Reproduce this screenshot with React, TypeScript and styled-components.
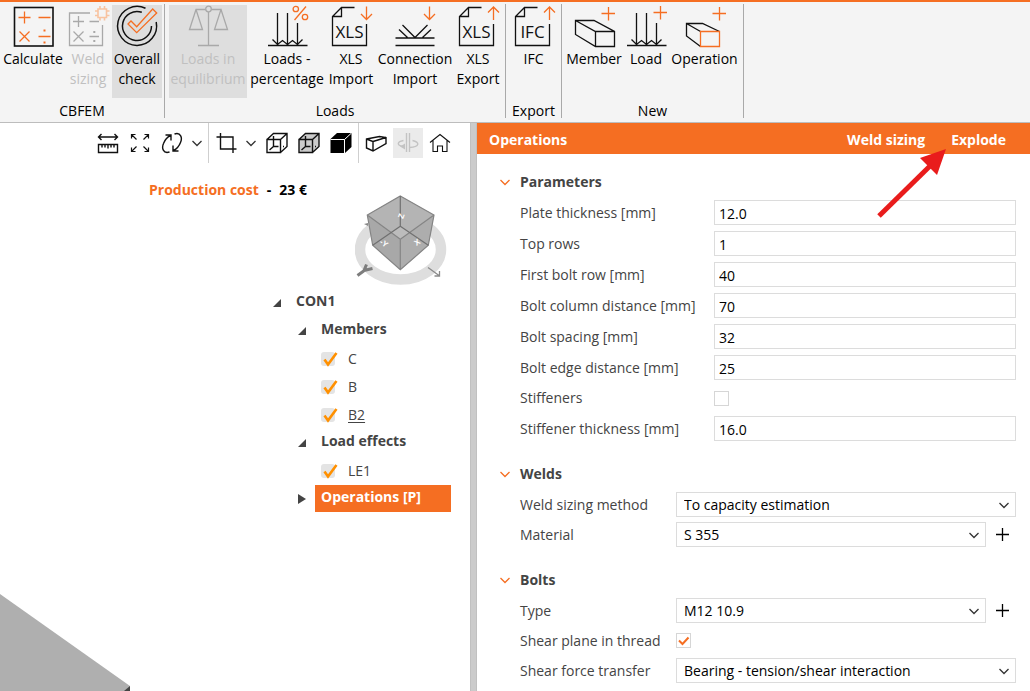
import React, { useId, useState } from 'react';
import styled, { createGlobalStyle, css } from 'styled-components';

const orange = '#f56e22';

const GlobalStyle = createGlobalStyle`
  *, *::before, *::after { box-sizing: border-box; }
  body {
    margin: 0;
    background: #fff;
    color: #444;
    font-family: "Open Sans", "Noto Sans", sans-serif;
    font-size: 14px;
    line-height: 20px;
  }
  button, input, select { font: inherit; color: inherit; }
  button { border: 0; background: none; padding: 0; cursor: pointer; }
  svg { display: block; }
`;

/* ---------- frame ---------- */

const Page = styled.div`
  display: flex;
  flex-direction: column;
  min-height: 100vh;
`;

const Workspace = styled.main`
  display: flex;
  flex: 1;
`;

const Splitter = styled.div`
  flex: none;
  width: 7px;
  background: #cbcbcb;
  border: 1px solid #c0c0c0;
  border-width: 0 1px;
`;

/* ---------- ribbon ---------- */

const Ribbon = styled.header`
  display: flex;
  height: 123px;
  padding: 2px 0 4px;
  background: #f4f4f4;
  border-top: 2px solid ${orange};
  border-bottom: 1px solid #bdbdbd;
  color: #000;
`;

const RibbonGroup = styled.section<{ $pad: number }>`
  display: flex;
  flex-direction: column;
  gap: 4px;
  padding: 1px ${(p) => p.$pad}px 0;
  border-right: 1px solid #a9a9a9;
`;

const RibbonItems = styled.div`
  display: flex;
  gap: 2px;
`;

const RibbonLabel = styled.h2`
  margin: 0;
  font-size: 14px;
  font-weight: 400;
  line-height: 18px;
  text-align: center;
`;

const RibbonButton = styled.button<{ $width: number; $shaded?: boolean }>`
  display: flex;
  flex-direction: column;
  align-items: center;
  width: ${(p) => p.$width}px;
  height: 93px;
  white-space: nowrap;
  background: ${(p) => (p.$shaded ? '#dedede' : 'transparent')};
  &:disabled { color: #c0c0c0; cursor: default; }
`;

const RibbonIcon = styled.svg`
  flex: none;
  width: 48px;
  height: 44px;
  overflow: visible;
  fill: none;
  stroke: #111;
  stroke-width: 1.3;
  .accent { stroke: ${orange}; }
  .faded { stroke: #f8c3a0; }
  .muted { stroke: #a9a9a9; }
  text {
    fill: #111;
    stroke: none;
    font-family: "Liberation Sans Narrow", "Open Sans", sans-serif;
    font-size: 17px;
    text-anchor: middle;
  }
`;

const Calculate = () => (
  <>
    <rect x="5.500" y="2.500" width="38.500" height="38.500" strokeWidth="1.600" />
    <g className="accent">
      <path d="M9.500 12.500h12M15.500 6.500v12M29.500 12.500h12M10.500 26.500l10 10M20.500 26.500l-10 10M29.500 31.500h12" />
      <path d="M34.500 25.500h2M34.500 37.500h2" strokeWidth="2" />
    </g>
  </>
);

const WeldSizing = () => (
  <>
    <g className="muted">
      <path d="M26 8H5.500V40.500H38.500V20M9 16.500h11M14.500 11v11M25.500 16.500h9.500M9.500 26.500l10 10M19.500 26.500l-10 10M25.500 31.500h9.500" />
      <path d="M29.300 27h2M29.300 36h2" strokeWidth="2" />
    </g>
    <path
      className="faded"
      strokeWidth="1.600"
      d="M34 4h8.500v8.500H34zM36 4V1M40.500 4V1M36 12.500v3M40.500 12.500v3M34 6H31M34 10.500H31M42.500 6h3M42.500 10.500h3"
    />
  </>
);

const OverallCheck = () => (
  <>
    <path d="M32.500 3.300A19.500 19.500 0 1 0 43.200 17" strokeWidth="1.500" />
    <path d="M28.800 7.300A14.500 14.500 0 1 0 38.500 21" strokeWidth="1.500" />
    <path className="accent" d="M15 19l3-3 5.700 5.700L39.700 4l4 4-20 19.700z" />
  </>
);

const Balance = () => (
  <g className="muted">
    <circle cx="24.500" cy="4" r="2.800" />
    <path d="M21.500 4.500H12L5.500 24.500H18.500L12 4.500M27.500 4.500H37L30.500 24.500H43.500L37 4.500M24.500 7V40.500M14 40.500H35" />
  </g>
);

const LoadArrows = () => (
  <path d="M5 40.500H44.500M14.500 8V40M24.500 8V40M34.500 18V40M9.500 34.500l5 5 5-4 5 4 5-4 5 4 5-5" />
);

const LoadsPercentage = () => (
  <>
    <LoadArrows />
    <g className="accent">
      <circle cx="32.800" cy="4" r="2.700" />
      <circle cx="42" cy="12" r="2.700" />
      <path d="M43 1.500L31.500 15" />
    </g>
  </>
);

const FileIcon = ({ text, up }: { text: string; up?: boolean }) => (
  <>
    <path d="M27.500 2.500H14.500L5.500 11.500V40.500H39.500V19M14.500 2.500V11.500H5.500" />
    <text x="22.500" y="33">{text}</text>
    <path className="accent" d={up ? 'M39.500 15V2M34 7.500l5.500-5.500 5.500 5.500' : 'M39.500 1.500V14.500M34 9l5.500 5.500L45 9'} />
  </>
);

const ConnectionImport = () => (
  <>
    <path d="M4.500 33H43.500M4.500 40.500H43.500M11.500 20l12.500 12.500L36.500 20M8 24.500l8.500 8M40 24.500l-8.500 8M40.500 20.500" />
    <path d="M17 20.500M12 24" />
    <path className="accent" d="M38.500 1.500V14.500M33 9l5.500 5.500L44 9" />
  </>
);

const MemberIcon = () => (
  <>
    <path d="M5.500 15.500H24L44.500 26.500V41.500H25.500L5.500 29.500zL25.500 26.500H44.500M25.500 26.500V41.500" />
    <path className="accent" d="M31.500 8.500h13.500M38.500 2v13.500" />
  </>
);

const LoadIcon = () => (
  <>
    <LoadArrows />
    <path className="accent" d="M31.500 7.500h13.500M38.500 1v13.500" />
  </>
);

const OperationIcon = () => (
  <>
    <path d="M19.500 41.500L5.500 31V18.500H21.500L38.500 26.500M5.500 18.500L19.500 26.500" />
    <path className="accent" d="M19.500 26.500H38.500V41.500H19.500zM31.500 8.500h13.500M38.500 2v13.500" />
  </>
);

type RibbonItem = {
  lines: string[];
  width: number;
  icon: React.ReactNode;
  disabled?: boolean;
  shaded?: boolean;
};

const ribbonGroups: { title: string; pad: number; items: RibbonItem[] }[] = [
  {
    title: 'CBFEM',
    pad: 2,
    items: [
      { lines: ['Calculate'], width: 62, icon: <Calculate /> },
      { lines: ['Weld', 'sizing'], width: 44, icon: <WeldSizing />, disabled: true },
      { lines: ['Overall', 'check'], width: 50, icon: <OverallCheck />, shaded: true },
    ],
  },
  {
    title: 'Loads',
    pad: 4,
    items: [
      { lines: ['Loads in', 'equilibrium'], width: 78, icon: <Balance />, disabled: true, shaded: true },
      { lines: ['Loads -', 'percentage'], width: 76, icon: <LoadsPercentage /> },
      { lines: ['XLS', 'Import'], width: 48, icon: <FileIcon text="XLS" /> },
      { lines: ['Connection', 'Import'], width: 76, icon: <ConnectionImport /> },
      { lines: ['XLS', 'Export'], width: 46, icon: <FileIcon text="XLS" up /> },
    ],
  },
  {
    title: 'Export',
    pad: 4,
    items: [{ lines: ['IFC'], width: 47, icon: <FileIcon text="IFC" up /> }],
  },
  {
    title: 'New',
    pad: 4,
    items: [
      { lines: ['Member'], width: 56, icon: <MemberIcon /> },
      { lines: ['Load'], width: 44, icon: <LoadIcon /> },
      { lines: ['Operation'], width: 69, icon: <OperationIcon /> },
    ],
  },
];

/* ---------- 3D scene ---------- */

const Scene = styled.section`
  position: relative;
  display: flex;
  flex-direction: column;
  flex: 470 1 0;
  min-width: 0;
`;

const Toolbar = styled.div`
  display: flex;
  justify-content: flex-end;
  gap: 2px;
  height: 40px;
  padding-right: 15px;
`;

const ToolButton = styled.button<{ $narrow?: boolean; $shaded?: boolean }>`
  display: grid;
  place-items: center;
  align-self: center;
  width: ${(p) => (p.$narrow ? 19 : 30)}px;
  height: 30px;
  background: ${(p) => (p.$shaded ? '#ebebeb' : 'transparent')};
`;

const ToolDropdown = styled.div`
  display: flex;
`;

const ToolSeparator = styled.div`
  width: 1px;
  background: #cfcfcf;
`;

const ToolIcon = styled.svg`
  width: 22px;
  height: 22px;
  fill: none;
  stroke: #111;
  stroke-width: 1.4;
`;

const Chevron = styled.svg.attrs({ viewBox: '0 0 12 8', 'aria-hidden': true, children: <path d="M1.500 2L6 6.500 10.500 2" /> })<{
  $color?: string;
}>`
  width: 12px;
  height: 8px;
  fill: none;
  stroke: ${(p) => p.$color ?? '#333'};
  stroke-width: 1.3;
`;

const Cost = styled.p`
  display: flex;
  justify-content: flex-end;
  gap: 8px;
  margin: 17px 163px 0 0;
  color: #000;
  font-weight: 700;
`;

const CostName = styled.span`
  color: ${orange};
`;

const NavCube = styled.svg`
  align-self: flex-end;
  width: 92px;
  height: 92px;
  margin: -5px 23px 0 0;
  text { font-family: "Liberation Sans", sans-serif; }
`;

const Plate = styled.svg`
  position: absolute;
  left: 0;
  bottom: 0;
  width: 131px;
  height: 98px;
`;

/* ---------- model tree ---------- */

const Tree = styled.ul`
  align-self: flex-end;
  width: 178px;
  margin: 2px 19px 0 0;
  padding: 0;
  list-style: none;
`;

const TreeRow = styled.li<{ $indent: number }>`
  display: flex;
  gap: 9px;
  height: 28px;
  padding-left: ${(p) => p.$indent}px;
`;

const Twisty = styled.button`
  display: grid;
  place-items: center;
  width: 8px;
  height: 28px;
  svg { width: 8px; height: 10px; fill: #444; }
`;

const TreeLabel = styled.span<{ $selected?: boolean }>`
  flex: 1;
  height: 27px;
  padding-left: 6px;
  font-weight: 700;
  line-height: 24px;
  ${(p) => p.$selected && css`background: ${orange}; color: #fff;`}
`;

const TreeLeaf = styled.label<{ $underlined?: boolean }>`
  display: flex;
  align-items: center;
  gap: 10px;
  line-height: 28px;
  span { text-decoration: ${(p) => (p.$underlined ? 'underline' : 'none')}; text-underline-offset: 2px; }
`;

const TreeCheck = styled.div`
  display: grid;
  align-items: center;
  width: 17px;
  height: 17px;
  > * { grid-area: 1 / 1; }
  input {
    appearance: none;
    width: 14px;
    height: 14px;
    margin: 0;
    border-radius: 3px;
    background: #e4e4e4;
  }
  svg { width: 17px; height: 17px; fill: none; stroke: #ff9000; stroke-width: 2.6; pointer-events: none; }
  input:not(:checked) + svg { visibility: hidden; }
`;

type Node = { label: string; indent: number; kind: 'open' | 'closed' | 'leaf'; mark?: boolean };

const treeNodes: Node[] = [
  { label: 'CON1', indent: 0, kind: 'open' },
  { label: 'Members', indent: 25, kind: 'open' },
  { label: 'C', indent: 48, kind: 'leaf' },
  { label: 'B', indent: 48, kind: 'leaf' },
  { label: 'B2', indent: 48, kind: 'leaf', mark: true },
  { label: 'Load effects', indent: 25, kind: 'open' },
  { label: 'LE1', indent: 48, kind: 'leaf' },
  { label: 'Operations [P]', indent: 25, kind: 'closed', mark: true },
];

/* ---------- property panel ---------- */

const Panel = styled.section`
  position: relative;
  flex: 553 1 0;
  min-width: 0;
`;

const PanelHeader = styled.div`
  display: flex;
  align-items: center;
  gap: 26px;
  height: 31px;
  padding: 2px 24px 0 12px;
  background: ${orange};
  color: #fff;
  font-weight: 700;
`;

const PanelTitle = styled.h2`
  flex: 1;
  margin: 0;
  font-size: 14px;
`;

const PanelAction = styled.button`
  font-weight: 700;
`;

const PanelBody = styled.div`
  display: flex;
  flex-direction: column;
  gap: 23px;
  padding: 18px 14px 8px 22px;
`;

const SectionHeading = styled.h3`
  display: flex;
  align-items: center;
  gap: 9px;
  margin: 0 0 8px;
  font-size: 14px;
`;

const Fields = styled.div<{ $gap: number; $labelWidth: number }>`
  display: flex;
  flex-direction: column;
  gap: ${(p) => p.$gap}px;
  padding-left: 21px;
  > div > label { flex: none; width: ${(p) => p.$labelWidth}px; white-space: nowrap; }
`;

const Field = styled.div<{ $short?: boolean }>`
  display: flex;
  align-items: center;
  height: ${(p) => (p.$short ? 24 : 25)}px;
`;

const TextBox = styled.input`
  flex: 1;
  min-width: 0;
  height: 25px;
  padding: 1px 4px 0;
  border: 1px solid #dcdcdc;
  background: #fff;
  color: #000;
`;

const SelectFrame = styled.div`
  display: grid;
  flex: 1;
  align-items: center;
  min-width: 0;
  > * { grid-area: 1 / 1; }
  > svg { justify-self: end; margin-right: 6px; pointer-events: none; }
`;

const Select = styled.select`
  appearance: none;
  width: 100%;
  height: 25px;
  padding: 0 24px 0 7px;
  border: 1px solid #dcdcdc;
  border-radius: 0;
  background: #fff;
  color: #000;
`;

const AddButton = styled.button`
  display: grid;
  place-items: center;
  width: 30px;
  height: 25px;
  padding-left: 2px;
  svg { width: 15px; height: 15px; stroke: #000; stroke-width: 1.3; }
`;

const CheckFrame = styled.div`
  display: grid;
  > * { grid-area: 1 / 1; }
  input {
    appearance: none;
    width: 15px;
    height: 15px;
    margin: 0;
    border: 1px solid #d6d6d6;
    background: #fff;
  }
  svg { width: 15px; height: 15px; fill: none; stroke: ${orange}; stroke-width: 2; pointer-events: none; }
  input:not(:checked) + svg { visibility: hidden; }
`;

const Pointer = styled.svg`
  position: absolute;
  top: 25px;
  right: 82px;
  width: 72px;
  height: 72px;
  pointer-events: none;
`;

const Heading = ({ children }: { children: string }) => (
  <SectionHeading>
    <Chevron $color={orange} />
    {children}
  </SectionHeading>
);

const TextField = ({ label, value }: { label: string; value: string }) => {
  const id = useId();
  return (
    <Field>
      <label htmlFor={id}>{label}</label>
      <TextBox id={id} defaultValue={value} />
    </Field>
  );
};

const CheckField = ({ label, checked, short }: { label: string; checked?: boolean; short?: boolean }) => {
  const id = useId();
  return (
    <Field $short={short}>
      <label htmlFor={id}>{label}</label>
      <CheckFrame>
        <input id={id} type="checkbox" defaultChecked={checked} />
        <svg viewBox="0 0 15 15"><path d="M3 7.500l3.500 3.500L12.500 4.500" /></svg>
      </CheckFrame>
    </Field>
  );
};

const SelectField = ({ label, value, addable }: { label: string; value: string; addable?: boolean }) => {
  const id = useId();
  return (
    <Field>
      <label htmlFor={id}>{label}</label>
      <SelectFrame>
        <Select id={id} defaultValue={value}>
          <option>{value}</option>
        </Select>
        <Chevron />
      </SelectFrame>
      {addable && (
        <AddButton aria-label={`Add ${label.toLowerCase()}`}>
          <svg viewBox="0 0 15 15"><path d="M7.500 1v13M1 7.500h13" /></svg>
        </AddButton>
      )}
    </Field>
  );
};

const wireCube = 'M1 7.500H14.500V20.500H1zL7.500 1.500H21V14.500L14.500 20.500M14.500 7.500L21 1.500';
const hiddenEdges = 'M7.500 4V14.500H12.500M7.500 14.500L3.500 18M17 14.500h1';

const Tool = ({ label, shaded, children }: { label: string; shaded?: boolean; children: React.ReactNode }) => (
  <ToolButton aria-label={label} $shaded={shaded}>
    <ToolIcon viewBox="0 0 22 22">{children}</ToolIcon>
  </ToolButton>
);

const SceneToolbar = () => (
  <Toolbar>
    <Tool label="Measure">
      <path d="M1.500 5H20.500M4.500 2L1.500 5l3 3M17.500 2l3 3-3 3M1.500 12.500H20.500V20.500H1.500zM5 12.500v3M8 12.500v3M11 12.500v4M14 12.500v3M17 12.500v3" />
    </Tool>
    <Tool label="Zoom to fit">
      <path d="M2.500 6.500V2.500H6.500M2.500 2.500l5 5M15.500 2.500h4V6.500M19.500 2.500l-5 5M2.500 15.500v4H6.500M2.500 19.500l5-5M19.500 15.500v4H15.500M19.500 19.500l-5-5" strokeWidth="1.200" />
    </Tool>
    <ToolDropdown>
      <Tool label="Rotate">
        <path d="M8.500 20C2 22 .500 16 2.500 11.500C4 7.500 6.500 5 9.500 3.500M4.500 3H10V8.500M13.500 2C20 0 21.500 6 19.500 10.500C18 14.500 15.500 17 12.500 18.500M17.500 19H12V13.500" />
      </Tool>
      <ToolButton $narrow aria-label="Rotate options"><Chevron /></ToolButton>
    </ToolDropdown>
    <ToolSeparator />
    <ToolDropdown>
      <Tool label="Crop"><path d="M1.500 5H18V21M5.500 1V17H21.500" /></Tool>
      <ToolButton $narrow aria-label="Crop options"><Chevron /></ToolButton>
    </ToolDropdown>
    <Tool label="Wireframe view">
      <path d={wireCube} />
      <path d={hiddenEdges} />
    </Tool>
    <Tool label="Transparent view">
      <path d={wireCube} fill="#cbcbcb" />
      <path d={hiddenEdges} />
    </Tool>
    <Tool label="Solid view">
      <path d="M.500 7L7 1H21.500V15L15 21H.500z" fill="#000" stroke="none" />
      <path d="M.500 7.500H14.500V21M14.500 7.500L21.500 1" stroke="#fff" strokeWidth="1" />
    </Tool>
    <ToolSeparator />
    <Tool label="Member view">
      <path d="M1.500 7L14.500 4.500 21 5.500V11.500L8 19 1.500 16zL8 9.500V19M8 9.500L21 5.500" />
    </Tool>
    <Tool label="Rotate member" shaded>
      <path
        stroke="#c3c3c3"
        d="M9.500 1V20M12.500 1V20M6.500 8.500C-.500 10-.500 13.500 7 14.500M12.500 15.500C23 15 23 10 15.500 8.500"
      />
      <path d="M3 14.500L8 11.500V17.500z" fill="#c3c3c3" stroke="none" />
    </Tool>
    <Tool label="Home view">
      <path strokeWidth="1.100" d="M1 10.500L11 2.500 21 10.500M4 8.500V19.500H8.500V14H13.500V19.500H18V8.500" />
    </Tool>
  </Toolbar>
);

const ViewCube = () => (
  <NavCube viewBox="0 0 92 92" aria-label="View cube">
    <ellipse cx="45.500" cy="54.500" rx="40.500" ry="30" fill="none" stroke="#dedede" strokeWidth="10.500" />
    <path d="M9 29l4-1v3z" fill="#888" />
    <path d="M45.300 1L79 20 73.300 50.300 45.300 74.700 17.700 50.300 12.300 20z" fill="#a8a8a8" />
    <path d="M45.300 1L79 20 45.300 44.300 12.300 20z" fill="#b4b4b4" />
    <path d="M79 20L73.300 50.300 45.300 74.700V44.300z" fill="#adadad" />
    <path d="M45.300 31.300L54 37.500 45.300 44.300 37 37.500z" fill="#bcbcbc" />
    <g fill="none" stroke="#858585" strokeWidth="1.200">
      <path d="M45.300 1L79 20 73.300 50.300 45.300 74.700 17.700 50.300 12.300 20zM12.300 20L45.300 44.300 79 20M45.300 44.300V74.700" />
      <path d="M45.300 1V31.300M17.700 50.300L45.300 31.300 73.300 50.300" stroke="#707070" />
    </g>
    <g fill="#fff" fontSize="8" fontWeight="700" textAnchor="middle">
      <text x="46" y="24" transform="rotate(-70 46 21)">Z</text>
      <text x="29" y="51" transform="rotate(35 29 48)">-Y</text>
      <text x="62" y="50" transform="rotate(-35 62 47)">X</text>
    </g>
    <path d="M2.500 80.500L10 75M9 75.500L11.500 69.500M9 75.500L17.500 73.500" fill="none" stroke="#7d7d7d" strokeWidth="3" />
    <path d="M73 72.500L84 80.500M84.500 76V81H79.500" fill="none" stroke="#8a8a8a" strokeWidth="1.300" />
  </NavCube>
);

const TreeItem = ({ node }: { node: Node }) => {
  if (node.kind === 'leaf') {
    return (
      <TreeRow $indent={node.indent}>
        <TreeLeaf $underlined={node.mark}>
          <TreeCheck>
            <input type="checkbox" defaultChecked />
            <svg viewBox="0 0 17 17"><path d="M3.500 8.500l3.500 5L15.500 2" /></svg>
          </TreeCheck>
          <span>{node.label}</span>
        </TreeLeaf>
      </TreeRow>
    );
  }
  return (
    <TreeRow $indent={node.indent}>
      <Twisty aria-label={`Toggle ${node.label}`}>
        <svg viewBox="0 0 8 10">
          <path d={node.kind === 'open' ? 'M8 1V9H0z' : 'M0 0L8 5 0 10z'} />
        </svg>
      </Twisty>
      <TreeLabel $selected={node.mark}>{node.label}</TreeLabel>
    </TreeRow>
  );
};

export default function App() {
  const [overallOn, setOverallOn] = useState(true);

  return (
    <Page>
      <GlobalStyle />
      <Ribbon>
        {ribbonGroups.map((group) => (
          <RibbonGroup key={group.title} $pad={group.pad}>
            <RibbonItems>
              {group.items.map((item) => {
                const toggles = item.shaded && !item.disabled;
                return (
                  <RibbonButton
                    key={item.lines.join(' ')}
                    $width={item.width}
                    $shaded={toggles ? overallOn : item.shaded}
                    disabled={item.disabled}
                    onClick={toggles ? () => setOverallOn(!overallOn) : undefined}
                  >
                    <RibbonIcon viewBox="0 0 48 44">{item.icon}</RibbonIcon>
                    {item.lines.map((line) => (
                      <span key={line}>{line}</span>
                    ))}
                  </RibbonButton>
                );
              })}
            </RibbonItems>
            <RibbonLabel>{group.title}</RibbonLabel>
          </RibbonGroup>
        ))}
      </Ribbon>

      <Workspace>
        <Scene>
          <SceneToolbar />
          <Cost>
            <CostName>Production cost</CostName>
            <span>-</span>
            <span>23 €</span>
          </Cost>
          <ViewCube />
          <Tree>
            {treeNodes.map((node) => (
              <TreeItem key={node.label} node={node} />
            ))}
          </Tree>
          <Plate viewBox="0 0 131 98">
            <path d="M0 1L130 93V98H0z" fill="#afafaf" />
            <path d="M124 98L130 93V98z" fill="#444" />
          </Plate>
        </Scene>

        <Splitter />

        <Panel>
          <PanelHeader>
            <PanelTitle>Operations</PanelTitle>
            <PanelAction>Weld sizing</PanelAction>
            <PanelAction>Explode</PanelAction>
          </PanelHeader>
          <PanelBody>
            <section>
              <Heading>Parameters</Heading>
              <Fields $gap={6} $labelWidth={194}>
                <TextField label="Plate thickness [mm]" value="12.0" />
                <TextField label="Top rows" value="1" />
                <TextField label="First bolt row [mm]" value="40" />
                <TextField label="Bolt column distance [mm]" value="70" />
                <TextField label="Bolt spacing [mm]" value="32" />
                <TextField label="Bolt edge distance [mm]" value="25" />
                <CheckField label="Stiffeners" short />
                <TextField label="Stiffener thickness [mm]" value="16.0" />
              </Fields>
            </section>
            <section>
              <Heading>Welds</Heading>
              <Fields $gap={5} $labelWidth={156}>
                <SelectField label="Weld sizing method" value="To capacity estimation" />
                <SelectField label="Material" value="S 355" addable />
              </Fields>
            </section>
            <section>
              <Heading>Bolts</Heading>
              <Fields $gap={5} $labelWidth={156}>
                <SelectField label="Type" value="M12 10.9" addable />
                <CheckField label="Shear plane in thread" checked />
                <SelectField label="Shear force transfer" value="Bearing - tension/shear interaction" />
              </Fields>
            </section>
          </PanelBody>
          <Pointer viewBox="0 0 72 72" aria-hidden="true">
            <path d="M3 68L54 18" fill="none" stroke="#e91c1c" strokeWidth="5" />
            <path d="M70 1L61 27 44 10z" fill="#e91c1c" />
          </Pointer>
        </Panel>
      </Workspace>
    </Page>
  );
}
